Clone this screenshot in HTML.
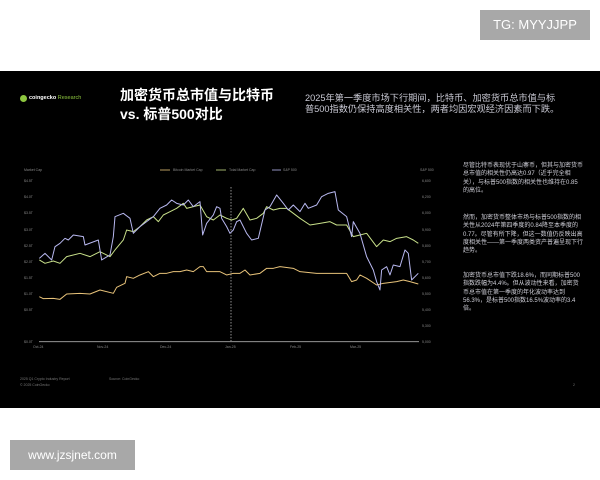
<!DOCTYPE html>
<html><head><meta charset="utf-8"><style>
body{margin:0;width:600px;height:480px;background:#fff;position:relative;overflow:hidden;font-family:"Liberation Sans","Noto Sans CJK SC",sans-serif}
.abs{position:absolute}
#slide{left:0;top:71px;width:600px;height:337px;background:#000}
.t{color:#fff;font-weight:bold;font-size:14px;line-height:19px;white-space:nowrap}
.d{color:#c9c9d4;font-size:9.2px;line-height:11px;white-space:nowrap}
.r{color:#cfcfd8;font-size:6px;line-height:8.3px;width:120px}
.s{color:#777;font-size:3.5px;white-space:nowrap}
</style></head><body>
<div class="abs" style="left:480px;top:10px;width:110px;height:30px;background:#a8a8a8;color:#fff;font-size:13px;line-height:30px;text-align:center">TG: MYYJJPP</div>
<div id="slide" class="abs"></div>
<div class="abs" style="left:20px;top:95px;width:7px;height:7px;border-radius:50%;background:#8dc63f"></div>
<div class="abs" style="left:29px;top:95px;font-size:5.5px;color:#fff;font-weight:bold;white-space:nowrap">coingecko <span style="color:#8dc63f;font-weight:normal">Research</span></div>
<div class="abs t" style="left:120px;top:86px">加密货币总市值与比特币<br>vs. 标普500对比</div>
<div class="abs d" style="left:305px;top:93px">2025年第一季度市场下行期间，比特币、加密货币总市值与标<br>普500指数仍保持高度相关性，两者均因宏观经济因素而下跌。</div>
<div class="abs r" style="left:463px;top:162px">尽管比特币表现优于山寨币，但其与加密货币总市值的相关性仍高达0.97（近乎完全相关），与标普500指数的相关性也维持在0.85的高位。</div>
<div class="abs r" style="left:463px;top:214px">然而，加密货币整体市场与标普500指数的相关性从2024年第四季度的0.84降至本季度的0.77。尽管有所下降，但这一数值仍反映出高度相关性——第一季度两类资产普遍呈现下行趋势。</div>
<div class="abs r" style="left:463px;top:272px">加密货币总市值下跌18.6%，而同期标普500指数跌幅为4.4%。但从波动性来看，加密货币总市值在第一季度的年化波动率达到56.3%，是标普500指数16.5%波动率的3.4倍。</div>
<div class="abs s" style="left:20px;top:377px">2025 Q1 Crypto Industry Report</div>
<div class="abs s" style="left:109px;top:377px">Source: CoinGecko</div>
<div class="abs s" style="left:20px;top:383px">© 2025 CoinGecko</div>
<div class="abs s" style="left:573px;top:383px">2</div>
<svg class="abs" style="left:0;top:0" width="600" height="480">
<g font-size="3.5" fill="#888" font-family="Liberation Sans">
<text x="24" y="171">Market Cap</text><text x="420" y="171">S&amp;P 500</text>
<text x="24" y="182">$4.5T</text><text x="24" y="198">$4.0T</text><text x="24" y="214">$3.5T</text><text x="24" y="231">$3.0T</text><text x="24" y="247">$2.5T</text><text x="24" y="263">$2.0T</text><text x="24" y="279">$1.5T</text><text x="24" y="295">$1.0T</text><text x="24" y="311">$0.5T</text><text x="24" y="343">$0.0T</text>
<text x="422" y="182">6,600</text><text x="422" y="198">6,200</text><text x="422" y="214">6,000</text><text x="422" y="231">5,900</text><text x="422" y="247">5,800</text><text x="422" y="263">5,700</text><text x="422" y="279">5,600</text><text x="422" y="295">5,500</text><text x="422" y="311">5,400</text><text x="422" y="327">5,300</text><text x="422" y="343">5,000</text>
<text x="33" y="348">Oct-24</text><text x="97" y="348">Nov-24</text><text x="160" y="348">Dec-24</text><text x="225" y="348">Jan-25</text><text x="290" y="348">Feb-25</text><text x="350" y="348">Mar-25</text>
<text x="173" y="171">Bitcoin Market Cap</text><text x="229" y="171">Total Market Cap</text><text x="283" y="171">S&amp;P 500</text>
</g>
<g stroke-width="0.8"><line x1="160" y1="170" x2="170" y2="170" stroke="#e8c37a"/><line x1="216" y1="170" x2="226" y2="170" stroke="#c8e08a"/><line x1="272" y1="170" x2="281" y2="170" stroke="#b8b8f0"/></g>
<line x1="39" y1="341.7" x2="419" y2="341.7" stroke="#aaa" stroke-width="0.8"/>
<line x1="231" y1="187" x2="231" y2="341" stroke="#ccc" stroke-width="0.7" stroke-dasharray="1.5,1.5"/>
<g transform="translate(0,150) scale(0.3333)" fill="none" stroke-width="3" stroke-linejoin="round">
<polyline stroke="#e8c37a" points="118,440 130,446 160,445 180,448 200,432 240,430 270,432 300,420 340,430 350,412 375,400 380,380 400,385 420,375 445,365 460,380 480,370 500,370 520,365 540,365 560,360 580,365 600,350 610,350 620,365 660,365 680,375 700,370 720,370 735,360 750,375 780,370 800,355 820,355 840,350 880,355 900,365 950,370 1000,370 1040,370 1055,395 1070,390 1080,375 1100,385 1130,405 1150,400 1190,395 1210,390 1230,395 1255,402"/>
<polyline stroke="#c8e08a" points="118,330 135,340 160,333 180,340 200,320 240,310 270,320 300,305 330,320 345,300 370,270 380,240 400,245 420,230 440,210 460,200 475,215 490,195 510,185 530,175 550,160 560,175 580,170 600,165 620,200 640,210 660,195 680,205 695,210 710,205 730,175 750,210 770,205 790,190 800,170 820,180 840,175 860,175 880,190 900,205 930,225 960,220 990,215 1010,225 1040,225 1060,260 1080,255 1100,250 1130,290 1150,270 1170,275 1190,265 1220,260 1240,270 1255,280"/>
<polyline stroke="#b8b8f0" points="118,325 135,310 155,330 165,290 180,280 195,265 205,270 220,255 250,260 255,285 295,270 305,330 330,315 340,260 345,200 370,190 390,205 400,250 420,230 460,200 480,175 500,165 515,150 530,160 550,165 565,150 580,170 600,155 608,255 620,220 640,195 650,170 660,175 665,205 680,230 690,250 700,240 710,215 720,210 740,250 755,270 775,265 795,180 810,170 830,135 850,160 865,180 880,165 900,185 915,160 925,175 950,165 965,140 985,130 1005,125 1015,180 1040,200 1055,260 1060,215 1080,250 1100,320 1120,360 1130,395 1140,420 1145,360 1160,350 1170,375 1180,345 1200,350 1215,300 1225,310 1235,390 1255,370"/>
</g>
</svg>
<div class="abs" style="left:10px;top:440px;width:125px;height:30px;background:#a8a8a8;color:#fff;font-size:12px;line-height:30px;text-align:center">www.jzsjnet.com</div>
</body></html>
